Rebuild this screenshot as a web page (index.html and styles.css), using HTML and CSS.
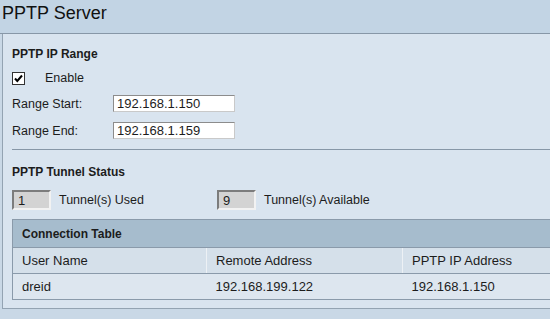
FILE: index.html
```html
<!DOCTYPE html>
<html lang="en">
    <head>
        <meta charset="UTF-8">
        <meta name="viewport" content="width=device-width, initial-scale=1.0">
        <title>PPTP Server</title>
        <link rel="stylesheet" href="styles.css">
    </head>
    <body>
        <div class="title">PPTP Server</div>
        <div class="page">
            <div class="panel">
                <div class="heading">PPTP IP Range</div>
                <div class="row check-row">
                    <span class="check">
                        <svg width="11" height="11" viewBox="0 0 11 11"><path d="M2 5.5 L4.3 8 L9 2.5" fill="none" stroke="#000" stroke-width="2"/></svg>
                    </span>
                    <span>Enable</span>
                </div>
                <div class="row field">
                    <span class="label">Range Start:</span>
                    <span class="box">192.168.1.150</span>
                </div>
                <div class="row field">
                    <span class="label">Range End:</span>
                    <span class="box">192.168.1.159</span>
                </div>
                <div class="sep"></div>
                <div class="heading heading2">PPTP Tunnel Status</div>
                <div class="row tunnels">
                    <div class="tunnel">
                        <span class="count">1</span>
                        <span>Tunnel(s) Used</span>
                    </div>
                    <div class="tunnel">
                        <span class="count">9</span>
                        <span>Tunnel(s) Available</span>
                    </div>
                </div>
                <table class="conn">
                    <thead>
                        <tr class="cap"><th colspan="3">Connection Table</th></tr>
                        <tr class="cols">
                            <td class="c1">User Name</td>
                            <td class="c2">Remote Address</td>
                            <td>PPTP IP Address</td>
                        </tr>
                    </thead>
                    <tbody>
                        <tr class="data">
                            <td>dreid</td>
                            <td>192.168.199.122</td>
                            <td>192.168.1.150</td>
                        </tr>
                    </tbody>
                </table>
            </div>
        </div>
    </body>
</html>
```

FILE: styles.css
```css
body {
    margin: 0;
    width: 550px;
    height: 319px;
    overflow: hidden;
    background-color: #c9d8e6;
    font-family: "Liberation Sans", Arial, sans-serif;
    font-size: 12.5px;
    color: #1c1c1c;
}
.title {
    height: 34px;
    box-sizing: border-box;
    padding: 2px 0 0 2px;
    font-size: 18px;
    line-height: 22px;
    color: #111;
    background-color: #c2d4e4;
    border-bottom: 1px solid #8797a7;
}
.page {
    padding-left: 2px;
}
.panel {
    width: 700px;
    height: 275px;
    box-sizing: border-box;
    padding: 8px 0 0 9px;
    background-color: #d9e4ef;
    border-left: 1px solid #93a3b2;
    border-bottom: 1px solid #93a3b2;
}
.heading {
    height: 24px;
    line-height: 24px;
    font-size: 12px;
    font-weight: bold;
}
.heading2 {
    margin-top: 10px;
}
.row {
    display: flex;
    align-items: center;
}
.check-row {
    height: 24px;
}
.check {
    width: 11px;
    height: 11px;
    border: 1px solid #333;
    background-color: #fff;
    margin-right: 20px;
    display: flex;
}
.field {
    height: 27px;
}
.label {
    width: 101px;
}
.box {
    width: 122px;
    height: 17px;
    box-sizing: border-box;
    padding-left: 3px;
    line-height: 15px;
    font-size: 13px;
    background-color: #fff;
    border: 1px solid #8c8c8c;
    border-right-color: #c9c9c9;
    border-bottom-color: #c9c9c9;
}
.sep {
    margin-top: 5px;
    height: 1px;
    background-color: #8797a7;
}
.tunnels {
    height: 31px;
    margin-bottom: 4px;
}
.tunnel {
    width: 205px;
    display: flex;
    align-items: center;
}
.count {
    width: 39px;
    height: 20px;
    box-sizing: border-box;
    padding-left: 4px;
    margin-right: 8px;
    line-height: 17px;
    font-size: 13px;
    background-color: #d3d3d3;
    border: 2px solid #7c7c7c;
    border-right-color: #f2f2f2;
    border-bottom-color: #f2f2f2;
}
.conn {
    width: 700px;
    border-collapse: collapse;
    border: 1px solid #8a9aaa;
}
.conn th {
    height: 27px;
    padding: 0 9px;
    text-align: left;
    font-size: 12px;
    font-weight: bold;
    background-color: #a6bccd;
    border-bottom: 1px solid #8a9aaa;
}
.conn td {
    padding: 0 9px;
    font-size: 13px;
}
.cols td {
    height: 25px;
    background-color: #d5e0ea;
    border-bottom: 1px solid #8a9aaa;
    border-right: 1px solid #edf1f5;
}
.data td {
    height: 25px;
    background-color: #dde6ef;
}
.c1 {
    width: 175px;
}
.c2 {
    width: 177px;
}
```
